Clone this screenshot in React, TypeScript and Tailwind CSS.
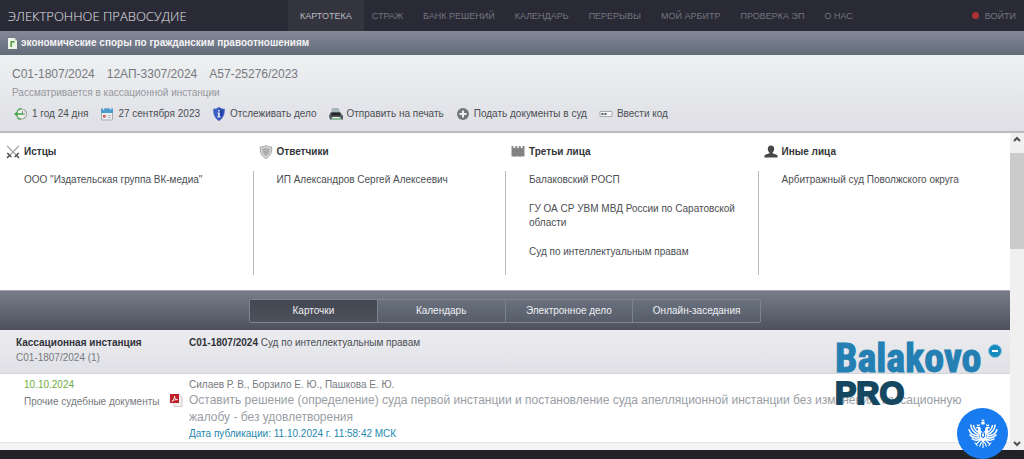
import type { ReactNode } from "react";

const navItems = ["СТРАЖ", "БАНК РЕШЕНИЙ", "КАЛЕНДАРЬ", "ПЕРЕРЫВЫ", "МОЙ АРБИТР", "ПРОВЕРКА ЭП", "О НАС"];
const caseNumbers = ["С01-1807/2024", "12АП-3307/2024", "А57-25276/2023"];

function DocIcon() {
  return (
    <svg viewBox="0 0 9 11" className="h-[11px] w-[9px]" aria-hidden="true">
      <path d="M0 0h6.5L9 2.5V11H0z" fill="#eef5e8" />
      <path d="M6.5 0v2.5H9z" fill="#b8c8b0" />
      <path d="M3.2 9V3.8h3.3" fill="none" stroke="#5da546" strokeWidth="1.7" />
    </svg>
  );
}

function HistoryIcon() {
  return (
    <svg viewBox="0 0 14 14" className="size-3.5" aria-hidden="true">
      <circle cx="7.5" cy="7" r="5" fill="#eff3ed" stroke="#a5aaa4" strokeWidth="1.2" />
      <path d="M3.500 3.600A5.300 5.300 0 0 1 7.500 1.500M3.300 10.300A5.300 5.300 0 0 0 7 12.400" fill="none" stroke="#55a854" strokeWidth="1.400" />
      <path d="M8.500 4V7H11" fill="none" stroke="#778177" />
      <path d="M0 7l3.500-2.800V6.300H9v1.500H3.500v2z" fill="#41a546" />
    </svg>
  );
}

function CalendarIcon() {
  return (
    <svg viewBox="0 0 14 14" className="size-3.5" aria-hidden="true">
      <path d="M1.5 2h11v11h-11z" fill="#e9edf1" stroke="#a7adb5" />
      <path d="M1 1.5h12V6H1z" fill="#4c9bce" />
      <path d="M3.5 0v3M10.5 0v3" stroke="#d4e5ef" strokeWidth="1.2" />
      <path d="M7.500 8.500h3.500M7.500 10.500h3.500" stroke="#b8bec6" />
      <path d="M3 8h2.600v2.600H3z" fill="#cf5a49" />
    </svg>
  );
}

function ShieldIcon() {
  return (
    <svg viewBox="0 0 14 14" className="size-3.5" aria-hidden="true">
      <path d="M7 0c1.800 1.300 3.600 1.800 5.800 1.800C13 7.500 11.200 11.600 7 14 2.800 11.600 1 7.500 1.200 1.800 3.400 1.800 5.200 1.300 7 0z" fill="#3c5fc2" />
      <path d="M7 1.500c1.500.9 2.900 1.300 4.600 1.400C11.600 7.500 10.300 10.700 7 12.700z" fill="#2545a6" />
      <path d="M6.200 3h1.600v1.600H6.200zM5.700 5.600h2.100v3.700h.7v1.200h-3V9.300h.7V6.800h-.5z" fill="#e8eefc" />
    </svg>
  );
}

function PrinterIcon() {
  return (
    <svg viewBox="0 0 14 14" className="size-3.5" aria-hidden="true">
      <path d="M3 1h6.500l2 5H2z" fill="#a9b6bb" />
      <path d="M1.500 5.500h10L14 9v3.500H1L0 9z" fill="#55595d" />
      <path d="M2.500 5.500h8.500v3H2.500z" fill="#24272b" />
      <path d="M3 10h8.500l1 3H2.500z" fill="#8ebb9b" />
      <path d="M3.500 10.500h7" stroke="#e9f0ed" />
    </svg>
  );
}

function PlusIcon() {
  return (
    <svg viewBox="0 0 14 14" className="size-3.5" aria-hidden="true">
      <circle cx="7" cy="7" r="6" fill="#74777a" />
      <path d="M7 3.500v7M3.500 7h7" stroke="#eceef0" strokeWidth="2" />
    </svg>
  );
}

function CodeIcon() {
  return (
    <svg viewBox="0 0 14 14" className="size-3.5" aria-hidden="true">
      <path d="M1 4.500h12v5H1z" fill="#f5f6f7" stroke="#a6a9ad" />
      <path d="M2.500 7h2M5.500 7h2" stroke="#56595d" strokeWidth="1.800" />
    </svg>
  );
}

function SwordsIcon() {
  return (
    <svg viewBox="0 0 14 14" className="size-3.5" aria-hidden="true">
      <path d="M1.200 1l8.800 9M12.800 1L4 10" stroke="#a2a4a6" strokeWidth="1.200" />
      <path d="M1.300 8l4 4M12.700 8l-4 4M3.400 10.400L1 13M10.600 10.400L13 13" stroke="#4e5052" strokeWidth="1.500" />
    </svg>
  );
}

function DefendantIcon() {
  return (
    <svg viewBox="0 0 14 14" className="size-3.5" aria-hidden="true">
      <path d="M7 .5c2 1.200 3.800 1.500 5.700 1.500C13 7.700 11.300 11.300 7 13.500 2.700 11.300 1 7.700 1.300 2 3.200 2 5 1.700 7 .5z" fill="#dadbdc" stroke="#9fa1a3" />
      <path d="M7 2.500c1.200.7 2.400 1 3.800 1.100C10.900 7.500 9.800 9.900 7 11.500 4.200 9.900 3.100 7.500 3.200 3.600 4.600 3.500 5.800 3.200 7 2.500z" fill="#adafb0" />
    </svg>
  );
}

function CastleIcon() {
  return (
    <svg viewBox="0 0 14 14" className="size-3.5" aria-hidden="true">
      <path d="M.5 1h2v2h1.700V1h2v2h1.600V1h2v2h1.700V1h2v10.500H.5z" fill="#858788" />
      <path d="M1 6h12M1 9h12M4 4v2M9 4v2M6.500 6v3M11 6v3M4 9v3M9 9v3" stroke="#76787a" strokeWidth=".6" />
    </svg>
  );
}

function PersonIcon() {
  return (
    <svg viewBox="0 0 14 14" className="size-3.5" aria-hidden="true">
      <path d="M7 .5c2 0 3.200 1.400 3.200 3.300C10.200 5.500 9.500 6.700 8.600 7.400v.8l4 1.600c.7.400 1 1 1 2.700H.4c0-1.700.3-2.300 1-2.700l4-1.600V7.400c-.9-.7-1.600-1.900-1.600-3.600C3.800 1.900 5 .5 7 .5z" fill="#444648" />
    </svg>
  );
}

function PdfIcon() {
  return (
    <svg viewBox="0 0 13 13" className="size-[13px]" aria-hidden="true">
      <path d="M4 1h6l2 2v9.500H4z" fill="#f3f1ef" stroke="#c5c2be" strokeWidth=".8" />
      <path d="M0 0h9v9H0z" fill="#bd1e27" />
      <path d="M1.800 7.300C3.300 6.300 4.400 4.300 4.500 2.200c.3 1.900 1.300 3.200 3 3.500-2-.2-4 .3-5.700 1.600z" fill="none" stroke="#fbe9e8" />
    </svg>
  );
}

function EagleIcon() {
  return (
    <svg viewBox="0 0 30 30" className="size-[30px]" fill="#fff" aria-hidden="true">
      <path d="M15 0v4M13.500 1.500h3" stroke="#fff" strokeWidth=".8" />
      <path d="M13 3.500l2-1 2 1-.6 2h-2.800zM8.700 5l1.500 1L12 5l-.5 2H9.200zM18 5l1.800 1 1.500-1-.5 2h-2.300z" />
      <path d="M7.500 9.500L9 7.800h2.600c1.300.8 1.300 2.200 1 3.700l2.400 2 2.400-2c-.3-1.500-.3-2.900 1-3.700H21l1.500 1.700-2.200-.2c-.8 1.500-.2 2.200.3 3.700l-2.200 3.200V20l-3.400 3.800-3.400-3.800v-3.800l-2.200-3.200c.5-1.500 1.100-2.200.3-3.700z" />
      <path d="M10.800 15.500C6.500 14.500 3 10.600 2.800 5.500M11 17C6 17 2.200 14.700.8 10.300M11.300 18.500C7.500 19.500 4 18.300 1.500 15.500M12 20c-3 1.600-6 1.500-8.500-.5M10 13C7.500 11.500 5.800 9 5.500 6" fill="none" stroke="#fff" strokeWidth="1.500" />
      <path d="M19.200 15.500c4.300-1 7.800-4.900 8-10M19 17c5 0 8.800-2.300 10.200-6.700M18.700 18.500c3.800 1 7.300-.2 9.800-3M18 20c3 1.600 6 1.500 8.500-.5M20 13c2.500-1.500 4.200-4 4.500-7" fill="none" stroke="#fff" strokeWidth="1.500" />
      <path d="M12.800 20.500L8.500 25M17.200 20.500l4.300 4.500M6.800 23.500L9.500 27M23.200 23.500L20.500 27M15 22v7M13.500 23l-2 4.500M16.500 23l2 4.500" fill="none" stroke="#fff" strokeWidth="1.100" />
      <path d="M13 13.500h4v4L15 19.500l-2-2z" fill="#187bef" />
      <path d="M14 14.500h2V17l-1 1-1-1z" />
    </svg>
  );
}

const actions: { icon: ReactNode; label: string }[] = [
  { icon: <HistoryIcon />, label: "1 год 24 дня" },
  { icon: <CalendarIcon />, label: "27 сентября 2023" },
  { icon: <ShieldIcon />, label: "Отслеживать дело" },
  { icon: <PrinterIcon />, label: "Отправить на печать" },
  { icon: <PlusIcon />, label: "Подать документы в суд" },
  { icon: <CodeIcon />, label: "Ввести код" },
];

const parties: { icon: ReactNode; title: string; people: string[] }[] = [
  { icon: <SwordsIcon />, title: "Истцы", people: ['ООО "Издательская группа ВК-медиа"'] },
  { icon: <DefendantIcon />, title: "Ответчики", people: ["ИП Александров Сергей Алексеевич"] },
  {
    icon: <CastleIcon />,
    title: "Третьи лица",
    people: ["Балаковский РОСП", "ГУ ОА СР УВМ МВД России по Саратовской области", "Суд по интеллектуальным правам"],
  },
  { icon: <PersonIcon />, title: "Иные лица", people: ["Арбитражный суд Поволжского округа"] },
];

const tabs = ["Календарь", "Электронное дело", "Онлайн-заседания"];

export default function App() {
  return (
    <div className="relative min-h-screen overflow-hidden bg-[#222327] font-['Liberation_Sans',Arial,sans-serif] text-[10px] leading-3.5 text-[#4b4e53]">
      <header className="flex h-[31px] items-stretch bg-[#2a2a36] text-[9px] text-[#74747e]">
        <a href="#home" className="flex w-72 items-center pl-2 font-['Open_Sans','Noto_Sans',sans-serif] text-[13px] font-light text-[#e4e4ea]">
          ЭЛЕКТРОННОЕ ПРАВОСУДИЕ
        </a>
        <nav className="flex items-stretch whitespace-nowrap">
          <a href="#cards" aria-current="page" className="mr-2 flex items-center bg-[#34343e] px-3 text-[#b9b9c0]">КАРТОТЕКА</a>
          <div className="flex items-center gap-5">
            {navItems.map((item) => (
              <a key={item} href="#section">{item}</a>
            ))}
          </div>
        </nav>
        <a href="#login" className="ml-auto flex items-center gap-1.5 pr-2">
          <span className="size-[7px] rounded-full bg-[#ac3436]" />
          ВОЙТИ
        </a>
      </header>

      <div className="flex h-6 items-center gap-1 bg-linear-to-b from-[#858999] to-[#626b78] pl-2 font-bold text-[#f4f4f6]">
        <DocIcon />
        <h1>экономические споры по гражданским правоотношениям</h1>
      </div>

      <section className="border-b-2 border-[#b9bac4] bg-linear-to-b from-[#eef1f2] to-[#dfdfe5] px-3 pt-[11px] pb-2.5">
        <h2 className="flex gap-3 text-[12px] leading-4 text-[#77797d]">
          {caseNumbers.map((n) => (
            <span key={n}>{n}</span>
          ))}
        </h2>
        <p className="mt-1 text-[#96989d]">Рассматривается в кассационной инстанции</p>
        <div className="mt-[7px] flex gap-3 whitespace-nowrap pl-0.5">
          {actions.map((a) => (
            <button key={a.label} type="button" className="flex items-center gap-1">
              {a.icon}
              {a.label}
            </button>
          ))}
        </div>
      </section>

      <div className="flex">
        <main className="min-w-0 flex-1 bg-white">
          <section className="grid grid-cols-4 pt-3 pb-[15px]">
            {parties.map((p, i) => (
              <div key={p.title} className="flex flex-col">
                <h3 className="flex items-center gap-1 pl-1.5 pb-3 font-bold text-[#34363a]">
                  {p.icon}
                  {p.title}
                </h3>
                <ul className={i === 0 ? "flex grow flex-col gap-[15px] pt-0.5 pl-6 pr-3 pb-4" : "flex grow flex-col gap-[15px] border-l border-[#b9b9bd] pt-0.5 pl-[23px] pr-3 pb-4"}>
                  {p.people.map((name) => (
                    <li key={name}>{name}</li>
                  ))}
                </ul>
              </div>
            ))}
          </section>

          <div className="flex h-10 items-center justify-center border-t border-[#a0a3a9] bg-linear-to-b from-[#797d89] to-[#4c515c]" role="tablist">
            <div className="flex h-6 w-lg overflow-hidden rounded-xs border border-[#7d8492] text-[#eff0f3]">
              <button type="button" role="tab" aria-selected="true" className="flex-1 bg-linear-to-b from-[#434752] to-[#4d515c]">Карточки</button>
              {tabs.map((t) => (
                <button key={t} type="button" role="tab" aria-selected="false" className="flex-1 border-l border-[#7b8290] bg-linear-to-b from-[#6a717e] to-[#565d69]">{t}</button>
              ))}
            </div>
          </div>

          <section className="flex h-11 items-start border-b border-[#d5d6db] bg-linear-to-b from-[#ececf0] to-[#e0e1e6] pt-1.5 pr-2 pl-4">
            <div className="w-[173px]">
              <h3 className="font-bold text-[#303238]">Кассационная инстанция</h3>
              <p className="mt-px text-[#777a80]">С01-1807/2024 (1)</p>
            </div>
            <p><b className="text-[#303238]">С01-1807/2024</b> Суд по интеллектуальным правам</p>
            <button type="button" aria-label="Свернуть" className="mt-2 ml-auto flex size-3.5 items-center justify-center rounded-full border border-[#8bc4df] bg-[#168bbd]">
              <span className="h-0.5 w-1.5 bg-white" />
            </button>
          </section>

          <section className="flex items-start pt-1">
            <div className="w-[170px] pl-6">
              <p className="text-[#6cad3f]">10.10.2024</p>
              <p className="mt-[3px] whitespace-nowrap text-[#777a7e]">Прочие судебные документы</p>
            </div>
            <div className="w-[19px] pt-4"><PdfIcon /></div>
            <div className="min-w-0 flex-1 pr-6">
              <p className="text-[#777a80]">Силаев Р. В., Борзило Е. Ю., Пашкова Е. Ю.</p>
              <a href="#document" className="block text-[12px] leading-[17px] text-[#9a9ea4]">
                Оставить решение (определение) суда первой инстанции и постановление суда апелляционной инстанции без изменения, кассационную жалобу - без удовлетворения
              </a>
              <p className="mt-px text-[#2488ae]">Дата публикации: 11.10.2024 г. 11:58:42 МСК</p>
            </div>
          </section>
          <div className="mt-px h-2 border-t border-[#e4e4e6] bg-[#f4f4f5]" />
        </main>

        <div className="flex w-3.5 flex-col items-center bg-[#f0f0f0]" aria-hidden="true">
          <svg viewBox="0 0 14 20" className="h-5 w-3.5" fill="none" stroke="#505050" strokeWidth="2"><path d="M4 8l3-3 3 3" /></svg>
          <div className="h-24 w-full bg-[#cbcbcb]" />
          <svg viewBox="0 0 14 14" className="mt-auto size-3.5" fill="none" stroke="#505050" strokeWidth="2"><path d="M4 6l3 3 3-3" /></svg>
        </div>
      </div>

      <div className="pointer-events-none absolute right-[43px] bottom-[52px] flex w-[146px] flex-col font-bold whitespace-nowrap">
        <span className="font-['Roboto_Condensed','Roboto',sans-serif] text-[40px] leading-10 text-[#247fb3] [-webkit-text-stroke:1px_#247fb3]">Balakovo</span>
        <span className="text-[32px] leading-7 text-[#164761] [-webkit-text-stroke:2px_#164761]">PRO</span>
      </div>

      <button type="button" aria-label="Государственные услуги" className="absolute right-4 bottom-0 flex size-[51px] items-center justify-center rounded-full bg-[#187bef]">
        <EagleIcon />
      </button>
    </div>
  );
}
